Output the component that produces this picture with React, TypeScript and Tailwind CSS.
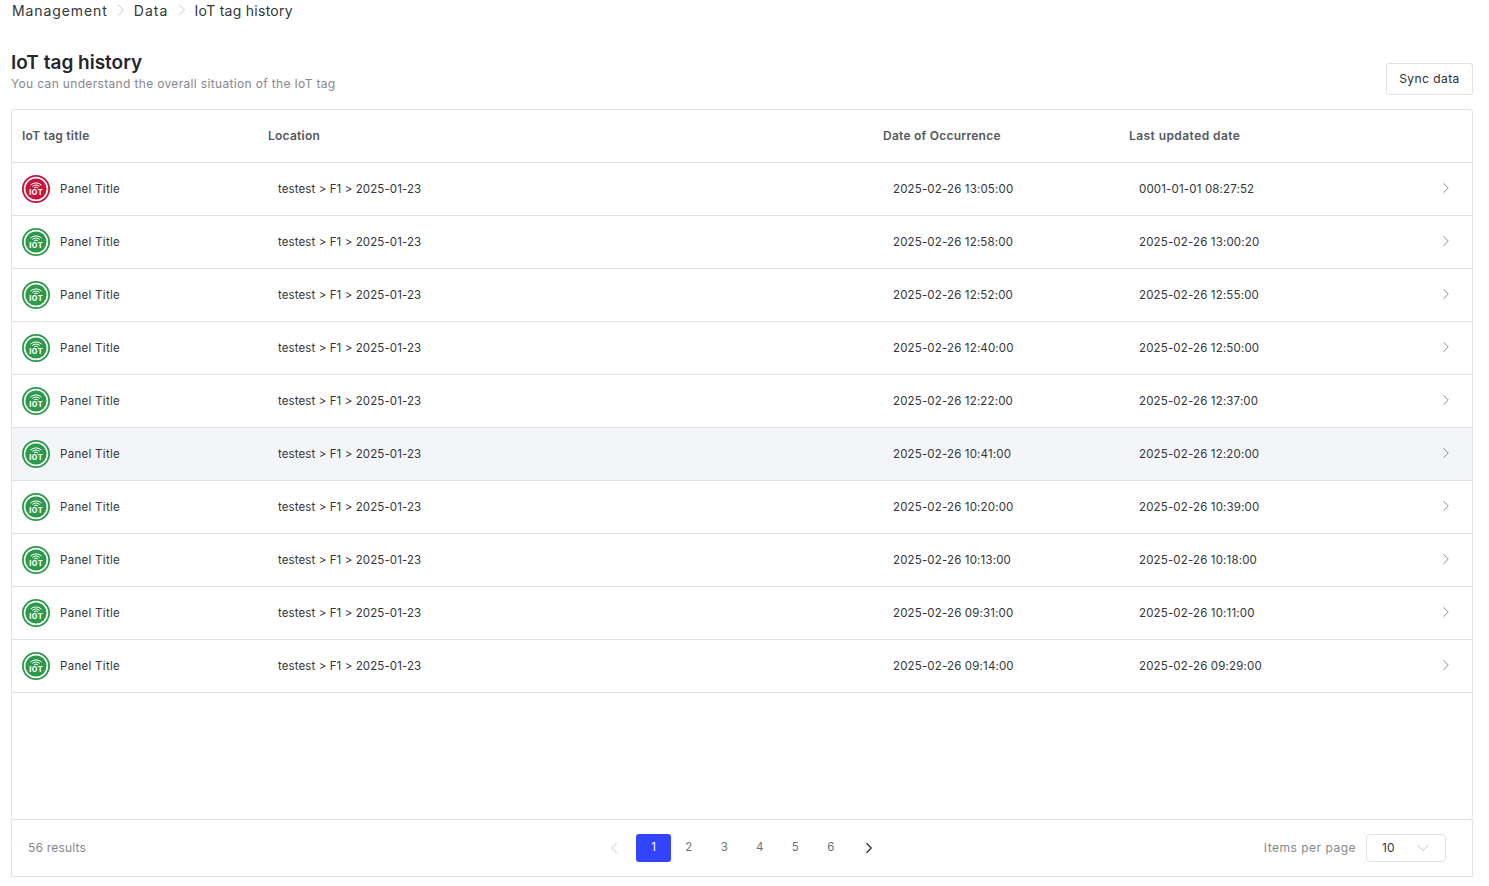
import { ChevronRight, ChevronLeft, ChevronDown } from "lucide-react";

const rows = [
  ["2025-02-26 13:05:00", "0001-01-01 08:27:52"],
  ["2025-02-26 12:58:00", "2025-02-26 13:00:20"],
  ["2025-02-26 12:52:00", "2025-02-26 12:55:00"],
  ["2025-02-26 12:40:00", "2025-02-26 12:50:00"],
  ["2025-02-26 12:22:00", "2025-02-26 12:37:00"],
  ["2025-02-26 10:41:00", "2025-02-26 12:20:00"],
  ["2025-02-26 10:20:00", "2025-02-26 10:39:00"],
  ["2025-02-26 10:13:00", "2025-02-26 10:18:00"],
  ["2025-02-26 09:31:00", "2025-02-26 10:11:00"],
  ["2025-02-26 09:14:00", "2025-02-26 09:29:00"],
];

function IotIcon({ color }: { color: string }) {
  return (
    <svg width="28" height="28" viewBox="0 0 28 28" className="shrink-0">
      <circle cx="14" cy="14" r="13.1" fill="none" stroke={color} strokeWidth="1.8" />
      <circle cx="14" cy="14" r="10.6" fill={color} />
      <g fill="none" stroke="#fff" strokeLinecap="round" strokeWidth="1">
        <path d="M8.8 9.8a7.6 7.6 0 0 1 10.4 0" />
        <path d="M10.6 11.2a5 5 0 0 1 6.8 0" />
        <path d="M12.4 12.6a2.4 2.4 0 0 1 3.2 0" />
      </g>
      <text x="14.2" y="19.6" textAnchor="middle" fill="#fff" fontSize="7.2" fontWeight="800" letterSpacing="0.6" fontFamily="Inter, sans-serif">
        IOT
      </text>
    </svg>
  );
}

export default function App() {
  return (
    <div className="h-[886px] w-[1489px] overflow-hidden bg-white font-['Inter',sans-serif] text-[#2b2d33]">
      <nav className="flex h-[20px] items-center pl-3 text-[14px] text-[#33353b]">
        <span className="tracking-[0.9px]">Management</span>
        <ChevronRight size={20} strokeWidth={0.8} className="mx-[3px] text-[#a3a6ad]" />
        <span className="tracking-[1.1px]">Data</span>
        <ChevronRight size={20} strokeWidth={0.8} className="mx-[3px] text-[#a3a6ad]" />
        <span className="tracking-[0.27px]">IoT tag history</span>
      </nav>

      <header className="mt-[30px] flex h-[45px] items-end justify-between pl-[11px] pr-4">
        <div className="pb-[2px]">
          <h1 className="text-[19px] leading-[24px] font-semibold text-[#24262b]">IoT tag history</h1>
          <p className="text-[12px] leading-[18px] tracking-[0.34px] text-[#85878d]">You can understand the overall situation of the IoT tag</p>
        </div>
        <button className="h-[32px] w-[87px] rounded-[3px] border border-[#dfe1e8] text-[12px] tracking-[0.45px] text-[#2b2d33]">Sync data</button>
      </header>

      <section className="mx-[11px] mt-[14px] h-[710px] w-[1462px] rounded-[4px] border border-b-0 border-[#e1e3ea]">
        <div className="grid h-[53px] grid-cols-[246px_615px_246px_1fr_54px] items-center border-b border-[#e1e3ea] text-[12px] font-semibold tracking-[0.25px] text-[#55575d]">
          <div className="pl-[10px]">IoT tag title</div>
          <div className="pl-[10px]">Location</div>
          <div className="pl-[10px]">Date of Occurrence</div>
          <div className="pl-[10px] tracking-[0.43px]">Last updated date</div>
          <div />
        </div>
        {rows.map((r, i) => (
          <div
            key={i}
            className={`grid h-[53px] grid-cols-[246px_615px_246px_1fr_54px] items-center border-b border-[#e1e3ea] text-[11.5px] tracking-[0.16px] text-[#33353b] ${i === 5 ? "bg-[#f4f5f8]" : ""}`}
          >
            <div className="flex items-center gap-[10px] pl-[10px]">
              <IotIcon color={i === 0 ? "#c8143c" : "#2b9a4b"} />
              <span className="pt-[2px] tracking-[0.3px]">Panel Title</span>
            </div>
            <div className="pl-5 pt-[2px] tracking-[0.1px]">testest &gt; F1 &gt; 2025-01-23</div>
            <div className="pl-5 pt-[2px]">{r[0]}</div>
            <div className="pl-5 pt-[2px]">{r[1]}</div>
            <div className="flex justify-center pb-[2px] pl-[2px]">
              <ChevronRight size={18} strokeWidth={0.9} className="text-[#55575d]" />
            </div>
          </div>
        ))}
      </section>

      <footer className="relative mx-[11px] flex h-[58px] w-[1462px] items-center justify-between border border-[#e1e3ea] pl-4 pr-[26px] text-[12px] text-[#85878d]">
        <span className="tracking-[0.2px]">56 results</span>
        <div className="absolute left-[592px] flex items-center text-[11.5px] text-[#6f7177]">
          <ChevronLeft size={20} strokeWidth={1} className="mr-[12px] text-[#b6b8be]" />
          <span className="flex h-[28px] w-[35px] items-center justify-center rounded-[3px] bg-[#3344ff] text-white">1</span>
          <span className="w-[35.5px] text-center">2</span>
          <span className="w-[35.5px] text-center">3</span>
          <span className="w-[35.5px] text-center">4</span>
          <span className="w-[35.5px] text-center">5</span>
          <span className="w-[35.5px] text-center">6</span>
          <ChevronRight size={18} strokeWidth={1.5} className="ml-[11px] text-[#24262b]" />
        </div>
        <div className="flex items-center gap-[10px]">
          <span className="tracking-[0.5px]">Items per page</span>
          <div className="flex h-[28px] w-[80px] items-center justify-between rounded-[4px] border border-[#dfe1e8] pl-[15px] pr-[12px] text-[#33353b]">
            <span>10</span>
            <ChevronDown size={20} strokeWidth={0.8} className="text-[#a3a6ad]" />
          </div>
        </div>
      </footer>
    </div>
  );
}
